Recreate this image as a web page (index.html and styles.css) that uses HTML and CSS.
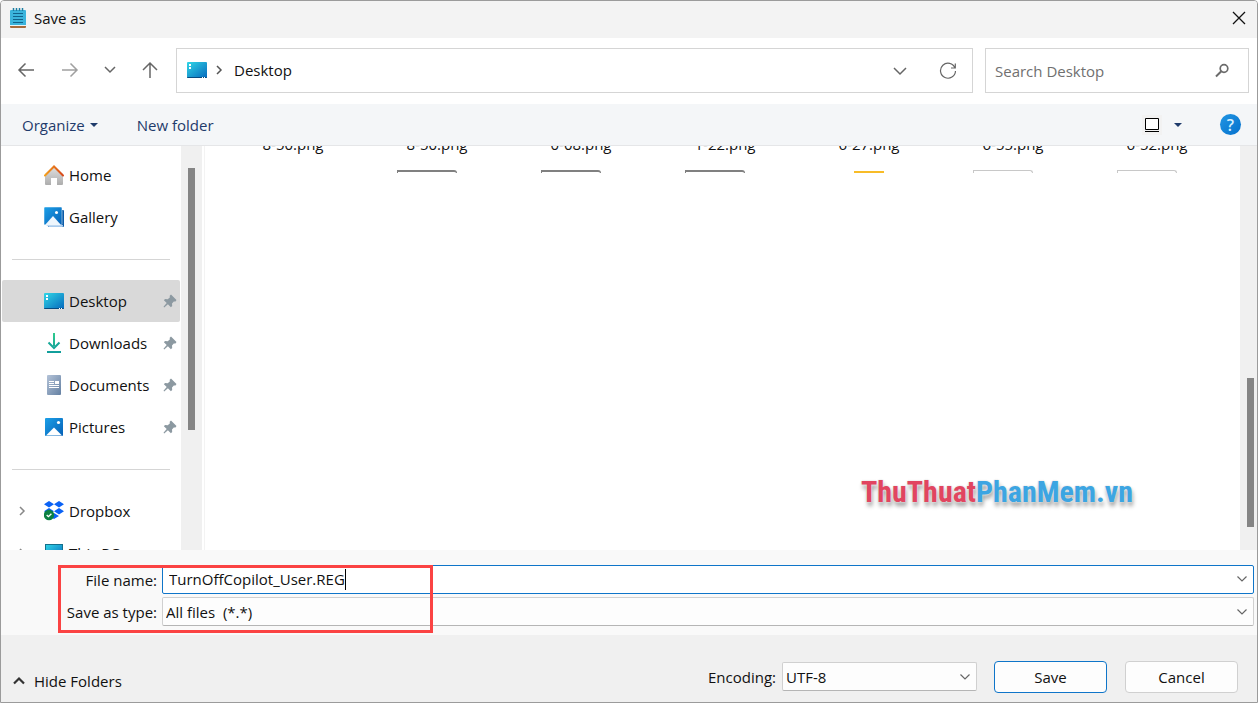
FILE: index.html
```html
<!DOCTYPE html>
<html lang="en">
<head>
    <meta charset="UTF-8">
    <meta name="viewport" content="width=device-width, initial-scale=1.0">
    <title>Save as</title>
    <link rel="stylesheet" href="styles.css">
</head>
<body>
    <!-- Shared icons -->
    <svg class="sprite" width="0" height="0" aria-hidden="true">
        <defs>
            <linearGradient id="desk" x1="0" y1="0" x2="1" y2="1">
                <stop offset="0" stop-color="#31d6e6"/><stop offset="1" stop-color="#0669bd"/>
            </linearGradient>
            <linearGradient id="blue" x1="0" y1="0" x2="1" y2="1">
                <stop offset="0" stop-color="#1ca0e8"/><stop offset="1" stop-color="#0560b6"/>
            </linearGradient>
            <linearGradient id="roof" x1="0" y1="0" x2="1" y2="0">
                <stop offset="0" stop-color="#f5a01c"/><stop offset="1" stop-color="#d8481c"/>
            </linearGradient>
            <linearGradient id="wall" x1="0" y1="0" x2="0" y2="1">
                <stop offset="0" stop-color="#e2e2e2"/><stop offset="1" stop-color="#adadad"/>
            </linearGradient>
            <linearGradient id="down" x1="0" y1="0" x2="0" y2="1">
                <stop offset="0" stop-color="#2fcb8d"/><stop offset="1" stop-color="#109c9c"/>
            </linearGradient>
            <linearGradient id="doc" x1="0" y1="0" x2="1" y2="1">
                <stop offset="0" stop-color="#b4c3d8"/><stop offset="1" stop-color="#6480a2"/>
            </linearGradient>
        </defs>
        <symbol id="i-desktop" viewBox="0 0 20 20">
            <rect y="2" width="20" height="16" rx="1" fill="url(#desk)"/>
            <path d="M0 17h20v0a1 1 0 0 1-1 1H1a1 1 0 0 1-1-1z" fill="#074b80"/>
            <path d="M2 4h2v2H2zM2 7h2v2H2zM15 17h1v1h-1zM17 17h1v1h-1z" fill="#fff"/>
        </symbol>
        <symbol id="i-pin" viewBox="0 0 14 14">
            <path d="M8 .5l5.500 5.500-1 1.500-1.700-.1-1.800 2 .2 2.700-1.300 1.200L4.900 10.300 1.200 13.500.5 12.800 3.700 9.100.9 6.300 2 5l2.700.2 2.100-1.800L6.700 1.800z" fill="#8c99a1"/>
        </symbol>
        <symbol id="i-down" viewBox="0 0 14 14">
            <path d="M2.500 4.500L7 9l4.500-4.500" fill="none" stroke="currentColor" stroke-width="1.200"/>
        </symbol>
        <symbol id="i-right" viewBox="0 0 10 14">
            <path d="M3 3l4 4-4 4" fill="none" stroke="currentColor" stroke-width="1.500"/>
        </symbol>
        <symbol id="i-tri" viewBox="0 0 8 4"><path d="M0 0h8L4 4z" fill="#1f3b6b"/></symbol>
    </svg>

    <div class="dialog">
        <header class="titlebar">
            <svg class="notepad" viewBox="0 0 16 20">
                <rect y="2" width="16" height="17" rx="1" fill="#3bb4dc"/>
                <path d="M0 18h16v1a1 1 0 0 1-1 1H1a1 1 0 0 1-1-1z" fill="#a86b3c"/>
                <path d="M0 17h16v1H0z" fill="#e8f4f8"/>
                <path d="M3.500 0v3M6.500 0v3M9.500 0v3M12.500 0v3" stroke="#1c7ea3" stroke-width="1.500"/>
                <path d="M3 5.500h10M3 8.500h10M3 11.500h10M3 14.500h10" stroke="#11638c" stroke-width="1.200"/>
            </svg>
            <h1>Save as</h1>
            <button class="icon-button close" aria-label="Close">
                <svg width="14" height="14" viewBox="0 0 14 14"><path d="M1 1l12 12M13 1L1 13" stroke="#111" stroke-width="1.300"/></svg>
            </button>
        </header>

        <nav class="navbar">
            <div class="history">
                <button class="icon-button" aria-label="Back">
                    <svg width="18" height="18" viewBox="0 0 18 18"><path d="M17 9H2M8.500 2.500L2 9l6.500 6.500" class="stroke"/></svg>
                </button>
                <button class="icon-button faded" aria-label="Forward">
                    <svg width="18" height="18" viewBox="0 0 18 18"><path d="M1 9h15M9.500 2.500L16 9l-6.500 6.500" class="stroke"/></svg>
                </button>
                <button class="icon-button recent" aria-label="Recent locations">
                    <svg width="14" height="14" viewBox="0 0 14 14"><path d="M2 4l5 5 5-5" class="stroke"/></svg>
                </button>
                <button class="icon-button" aria-label="Up">
                    <svg width="18" height="18" viewBox="0 0 18 18"><path d="M9 17V2M2 9l7-7 7 7" class="stroke"/></svg>
                </button>
            </div>
            <div class="address">
                <svg class="icon"><use href="#i-desktop"/></svg>
                <svg class="crumb"><use href="#i-right"/></svg>
                <span>Desktop</span>
                <button class="icon-button expand" aria-label="Previous locations">
                    <svg width="16" height="16" viewBox="0 0 16 16"><path d="M2 6l6 6 6-6" class="stroke"/></svg>
                </button>
                <button class="icon-button" aria-label="Refresh">
                    <svg width="18" height="18" viewBox="0 0 18 18"><path d="M16 7A7.500 7.500 0 1 0 16.500 10M16.300 2.500V7H12" class="stroke thin"/></svg>
                </button>
            </div>
            <div class="search">
                <input type="search" placeholder="Search Desktop" aria-label="Search Desktop">
                <svg width="16" height="16" viewBox="0 0 16 16"><circle cx="10" cy="5.500" r="3.800" fill="none" stroke="#6b6b6b" stroke-width="1.700"/><path d="M7.300 8.300L2 13.500" stroke="#6b6b6b" stroke-width="2"/></svg>
            </div>
        </nav>

        <div class="toolbar">
            <button class="link-button">Organize <svg class="tri"><use href="#i-tri"/></svg></button>
            <button class="link-button">New folder</button>
            <button class="icon-button view" aria-label="Change your view">
                <svg width="20" height="20" viewBox="0 0 20 20"><path fill="#f2f2f2" d="M0 0h20v20H0z"/><path d="M3.500 3.500h13v11h-13z" fill="#fff" stroke="#000"/><path d="M3 16h14v1H3z"/></svg>
            </button>
            <button class="icon-button more" aria-label="More options"><svg class="tri"><use href="#i-tri"/></svg></button>
            <button class="help" aria-label="Get help">?</button>
        </div>

        <main class="browser">
            <aside class="sidebar">
                <ul class="tree">
                    <li><a href="#">
                        <svg class="icon" viewBox="0 0 20 20"><path d="M1 9l9-8 9 8v10a1 1 0 0 1-1 1h-5v-7H7v7H2a1 1 0 0 1-1-1z" fill="url(#wall)"/><path d="M1 10.500l9-9 9 9" fill="none" stroke="url(#roof)" stroke-width="2" stroke-linecap="round"/></svg>
                        Home
                    </a></li>
                    <li><a href="#">
                        <svg class="icon" viewBox="0 0 20 20"><path d="M4 3h15a1 1 0 0 1 1 1v15a1 1 0 0 1-1 1H4z" fill="#0a5ba8"/><path d="M2 18h17v1a1 1 0 0 1-1 1H5z" fill="#a9cbed"/><rect width="18" height="18" rx="1" fill="url(#blue)" stroke="#fff" stroke-width=".5"/><path d="M1 18l8-9 8 9z" fill="#eef6fd"/><circle cx="12.500" cy="5.500" r="1.500" fill="#fff"/></svg>
                        Gallery
                    </a></li>
                    <li class="divider"></li>
                    <li><a href="#" class="selected">
                        <svg class="icon"><use href="#i-desktop"/></svg>
                        Desktop
                        <svg class="pin"><use href="#i-pin"/></svg>
                    </a></li>
                    <li><a href="#">
                        <svg class="icon" viewBox="0 0 20 20"><path d="M9 0h2v13H9zM3 18h14v2H3z" fill="url(#down)"/><path d="M4.500 9.500L10 15l5.500-5.500" fill="none" stroke="#17a898" stroke-width="2"/></svg>
                        Downloads
                        <svg class="pin"><use href="#i-pin"/></svg>
                    </a></li>
                    <li><a href="#">
                        <svg class="icon" viewBox="0 0 20 20"><rect x="3" width="14" height="20" rx="1" fill="url(#doc)"/><path d="M5 6.500h5M5 8.500h5M5 10.500h10M5 12.500h10" stroke="#fff"/><path d="M11 6h4v3h-4z" fill="#fff"/></svg>
                        Documents
                        <svg class="pin"><use href="#i-pin"/></svg>
                    </a></li>
                    <li><a href="#">
                        <svg class="icon" viewBox="0 0 20 20"><rect x="1" y="1" width="18" height="18" rx="1" fill="url(#blue)"/><path d="M2 18.500l8-8 8 8z" fill="#fff"/><circle cx="14.500" cy="5.500" r="1.600" fill="#fff"/></svg>
                        Pictures
                        <svg class="pin"><use href="#i-pin"/></svg>
                    </a></li>
                    <li class="divider"></li>
                    <li><a href="#">
                        <svg class="twisty"><use href="#i-right"/></svg>
                        <svg class="icon" viewBox="0 0 20 20"><path d="M5 0l5 3.200-5 3.300L0 3.200zM15 0l5 3.200-5 3.300-5-3.300zM5 7l5 3.200-5 3.300-5-3.300zM15 7l5 3.200-5 3.300-5-3.300zM10 12l5 3-5 3-5-3z" fill="#0a62f5"/><circle cx="5" cy="14" r="5.200" fill="#0b8043"/><path d="M2.700 14l1.700 1.700 3-3" fill="none" stroke="#fff" stroke-width="1.300"/></svg>
                        Dropbox
                    </a></li>
                    <li><a href="#">
                        <svg class="twisty"><use href="#i-right"/></svg>
                        <svg class="icon" viewBox="0 0 20 20"><rect x="1.500" y="1.500" width="17" height="14" fill="url(#desk)" stroke="#14708c"/></svg>
                        This PC
                    </a></li>
                </ul>
                <div class="scrollbar side-scroll"><div class="thumb"></div></div>
            </aside>

            <section class="files">
                <ul class="file-grid">
                    <li><span>8-50.png</span></li>
                    <li><span>8-50.png</span><i class="page dark"></i></li>
                    <li><span>0-08.png</span><i class="page dark"></i></li>
                    <li><span>1-22.png</span><i class="page dark"></i></li>
                    <li><span>6-27.png</span><i class="folder"></i></li>
                    <li><span>6-55.png</span><i class="page"></i></li>
                    <li><span>6-52.png</span><i class="page"></i></li>
                </ul>
                <p class="watermark"><span>ThuThuat</span>PhanMem.vn</p>
            </section>
            <div class="scrollbar file-scroll"><div class="thumb"></div></div>
        </main>

        <section class="fields">
            <label for="file-name">File name:</label>
            <div class="name-box">
                <input type="text" id="file-name" value="TurnOffCopilot_User.REG" size="23">
                <span class="caret"></span>
                <svg class="arrow"><use href="#i-down"/></svg>
            </div>
            <label for="file-type">Save as type:</label>
            <div class="select-box">
                <select id="file-type"><option>All files&nbsp; (*.*)</option></select>
                <svg class="arrow"><use href="#i-down"/></svg>
            </div>
            <div class="highlight"></div>
        </section>

        <footer class="footer">
            <button class="hide-folders">
                <svg width="14" height="14" viewBox="0 0 14 14"><path d="M2 9.500l5-5 5 5" fill="none" stroke="#333" stroke-width="2.200"/></svg>
                Hide Folders
            </button>
            <label for="encoding">Encoding:</label>
            <div class="select-box encoding">
                <select id="encoding"><option>UTF-8</option></select>
                <svg class="arrow"><use href="#i-down"/></svg>
            </div>
            <button class="button primary">Save</button>
            <button class="button">Cancel</button>
        </footer>
    </div>
</body>
</html>
```
FILE: styles.css
```css
/* General Reset */
* {
    margin: 0;
    padding: 0;
    box-sizing: border-box;
}

body {
    font-family: "Open Sans", "Noto Sans", sans-serif;
    font-size: 15px;
    line-height: 20px;
    color: #111;
    background: #fff;
}

button, input, select {
    font: inherit;
    color: inherit;
    background: none;
    border: none;
    outline: none;
}

button {
    cursor: pointer;
}

ul {
    list-style: none;
}

svg {
    display: block;
    flex-shrink: 0;
}

.sprite {
    position: absolute;
}

.dialog {
    display: flex;
    flex-direction: column;
    height: 100vh;
    border: 1px solid #9b9b9b;
    border-radius: 4px 4px 0 0;
    overflow: hidden;
}

/* Title bar */
.titlebar {
    display: flex;
    align-items: center;
    height: 37px;
    padding: 0 11px 3px 9px;
    background: #f3f3f3;
}

.titlebar h1 {
    flex: 1;
    font-size: 15px;
    font-weight: 400;
}

.notepad {
    width: 16px;
    height: 20px;
    margin-right: 8px;
}

.icon-button {
    display: flex;
    align-items: center;
    justify-content: center;
    color: #666;
}

.stroke {
    fill: none;
    stroke: currentColor;
    stroke-width: 1.5;
}

.thin {
    stroke-width: 1.2;
}

/* Navigation row */
.navbar {
    display: flex;
    height: 66px;
    padding: 10px 8px 11px 16px;
}

.history {
    display: flex;
    align-items: center;
    width: 159px;
    padding-bottom: 1px;
    gap: 26px;
}

.faded {
    color: #a0a0a0;
}

.recent {
    margin: 0 -2px;
}

.address, .search {
    display: flex;
    align-items: center;
    border: 1px solid #d5d5d5;
}

.address {
    flex: 1;
    padding: 0 15px 2px 10px;
}

.icon {
    width: 20px;
    height: 20px;
}

.crumb {
    width: 10px;
    height: 14px;
    margin: 0 10px 0 7px;
    color: #555;
}

.expand {
    margin: 0 31px 0 auto;
}

.search {
    width: 264px;
    margin-left: 12px;
    padding: 0 18px 0 9px;
}

.search input {
    flex: 1;
    min-width: 0;
}

.search input::placeholder {
    color: #707070;
}

/* Toolbar */
.toolbar {
    display: flex;
    align-items: center;
    height: 42px;
    padding: 0 16px 0 21px;
    background: #f4f6f8;
    border-bottom: 1px solid #e5e6e8;
}

.link-button {
    display: flex;
    align-items: center;
    gap: 5px;
    margin-right: 39px;
    color: #1f3b6b;
}

.tri {
    width: 8px;
    height: 4px;
}

.view {
    margin-left: auto;
}

.more {
    margin: 0 38px 0 12px;
}

.help {
    width: 21px;
    height: 21px;
    border-radius: 50%;
    background: linear-gradient(135deg, #2196e3, #0470cc);
    font-size: 16px;
    font-weight: 600;
    color: #d5efff;
}

/* Sidebar and file list */
.browser {
    display: flex;
    flex: 1;
    min-height: 0;
}

.sidebar {
    display: flex;
    width: 201px;
    overflow: hidden;
}

.tree {
    flex: 1;
    padding: 8px 1px 0;
}

.tree li {
    height: 42px;
}

.tree a {
    display: flex;
    align-items: center;
    height: 42px;
    padding: 0 3px 0 42px;
    gap: 5px;
    border-radius: 2px;
    color: inherit;
    text-decoration: none;
}

.tree .selected {
    background: #d9d9d9;
}

.tree .divider {
    height: 1px;
    margin: 21px 10px 20px;
    background: #d5d5d5;
}

.twisty {
    width: 10px;
    height: 14px;
    margin: 0 12px 0 -27px;
    color: #888;
}

.pin {
    width: 14px;
    height: 14px;
    margin-left: auto;
}

.scrollbar {
    background: #f0f0f0;
}

.thumb {
    width: 7px;
    margin-left: 7px;
    background: #858585;
}

.side-scroll {
    width: 21px;
    padding-top: 22px;
}

.side-scroll .thumb {
    height: 262px;
}

.file-scroll {
    display: flex;
    align-items: flex-end;
    width: 17px;
    padding-bottom: 23px;
}

.file-scroll .thumb {
    height: 149px;
}

.files {
    display: flex;
    flex: 1;
    flex-direction: column;
    justify-content: space-between;
    min-width: 0;
    margin-left: 2px;
    padding: 0 11px 38px 16px;
    border-left: 1px solid #f3f3f3;
}

/* The list is scrolled, so only the bottom of the names and the top of the next row show */
.file-grid {
    display: flex;
    align-items: flex-end;
    height: 27px;
    overflow: hidden;
}

.file-grid li {
    display: flex;
    flex-direction: column;
    align-items: center;
    justify-content: flex-end;
    width: 144px;
    height: 47px;
}

.file-grid span {
    margin-bottom: auto;
    line-height: 36px;
}

.page {
    width: 60px;
    height: 3px;
    margin-right: 21px;
    border: 1px solid #c8c8c8;
    border-bottom: none;
    border-radius: 0 3px 0 0;
}

.dark {
    border-color: #808080;
    border-top-width: 2px;
}

.folder {
    width: 30px;
    height: 2px;
    background: #f8bc28;
}

.watermark {
    align-self: flex-end;
    margin-right: 96px;
    font-family: "Liberation Sans Narrow", "Roboto Condensed", "Liberation Sans", sans-serif;
    font-size: 30px;
    font-weight: 700;
    line-height: 40px;
    color: #3ca5e2;
    text-shadow: 0 0 2px #e5e5e5, 0 0 2px #e5e5e5, 1px 4px 4px #999;
}

.watermark span {
    color: #e14560;
}

/* File name and type */
.fields {
    position: relative;
    display: grid;
    grid-template-columns: 156px 1fr;
    column-gap: 5px;
    row-gap: 3px;
    align-items: center;
    padding: 15px 3px 9px 0;
    background: #f9f9f9;
}

.fields label {
    text-align: right;
}

.name-box {
    display: flex;
    align-items: center;
    height: 29px;
    padding: 0 4px 1px 6px;
    border: 1px solid #0f75c9;
    border-radius: 2px;
    background: #fff;
}

.name-box input {
    field-sizing: content;
}

.caret {
    width: 1px;
    height: 21px;
    background: #000;
}

.arrow {
    width: 14px;
    height: 14px;
    margin-left: auto;
    color: #666;
}

.select-box {
    display: grid;
    align-items: center;
    height: 29px;
    padding-right: 4px;
    border: 1px solid #d0d0d0;
    border-bottom-color: #b5b5b5;
    border-radius: 2px;
    background: #fdfdfd;
}

.select-box select, .select-box .arrow {
    grid-area: 1 / 1;
}

.select-box select {
    appearance: none;
    width: 100%;
    padding-left: 3px;
}

.select-box .arrow {
    pointer-events: none;
}

/* Red frame round both fields */
.highlight {
    position: absolute;
    top: 15px;
    left: 57px;
    width: 375px;
    height: 68px;
    border: 3px solid #fb4343;
    pointer-events: none;
}

/* Footer */
.footer {
    display: flex;
    align-items: center;
    height: 67px;
    padding: 16px 19px 0 11px;
    background: #f0f0f0;
}

.hide-folders {
    display: flex;
    align-items: center;
    gap: 8px;
    margin-right: auto;
    padding-top: 8px;
}

.encoding {
    width: 195px;
    margin: 0 17px 0 6px;
}

.button {
    width: 113px;
    height: 32px;
    border: 1px solid #d0d0d0;
    border-radius: 4px;
    background: #fdfdfd;
}

.primary {
    margin-right: 18px;
    border-color: #0f75c9;
}
```
